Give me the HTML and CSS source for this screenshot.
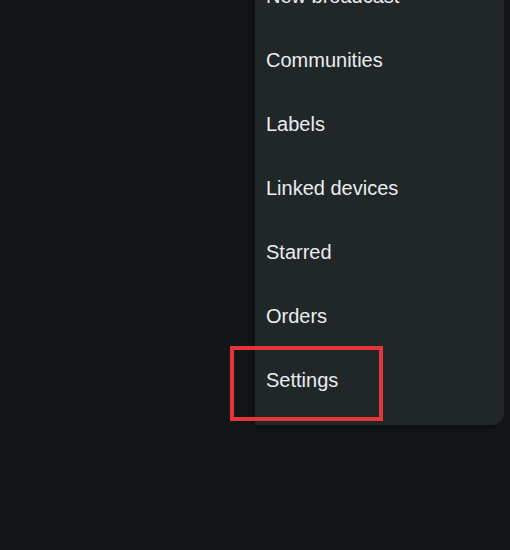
FILE: index.html
```html
<!DOCTYPE html>
<html>
<head>
<meta charset="utf-8">
<link rel="stylesheet" href="styles.css">
</head>
<body>
<div class="page">
  <div class="menu">
    <div class="item">New broadcast</div>
    <div class="item">Communities</div>
    <div class="item">Labels</div>
    <div class="item">Linked devices</div>
    <div class="item">Starred</div>
    <div class="item">Orders</div>
    <div class="item">Settings</div>
  </div>
  <div class="highlight"></div>
</div>
</body>
</html>
```
FILE: styles.css
```css
html, body {
  margin: 0;
  padding: 0;
  background: #121619;
  overflow: hidden;
}
.page {
  position: relative;
  width: 510px;
  height: 550px;
  display: flex;
  align-items: flex-start;
}
.menu {
  margin-left: 255px;
  margin-top: -36px;
  width: 249px;
  padding-bottom: 13px;
  background: #212629;
  border-radius: 0 0 12px 0;
  box-shadow: -2px 2px 8px rgba(0,0,0,0.35);
  display: flex;
  flex-direction: column;
}
.item {
  height: 64px;
  display: flex;
  align-items: center;
  padding-left: 11px;
  font-family: "Liberation Sans", Arial, sans-serif;
  font-size: 20px;
  color: #e9edef;
}
.highlight {
  position: absolute;
  left: 230px;
  top: 346px;
  width: 145px;
  height: 67px;
  border: 4px solid #e3353a;
}
```
